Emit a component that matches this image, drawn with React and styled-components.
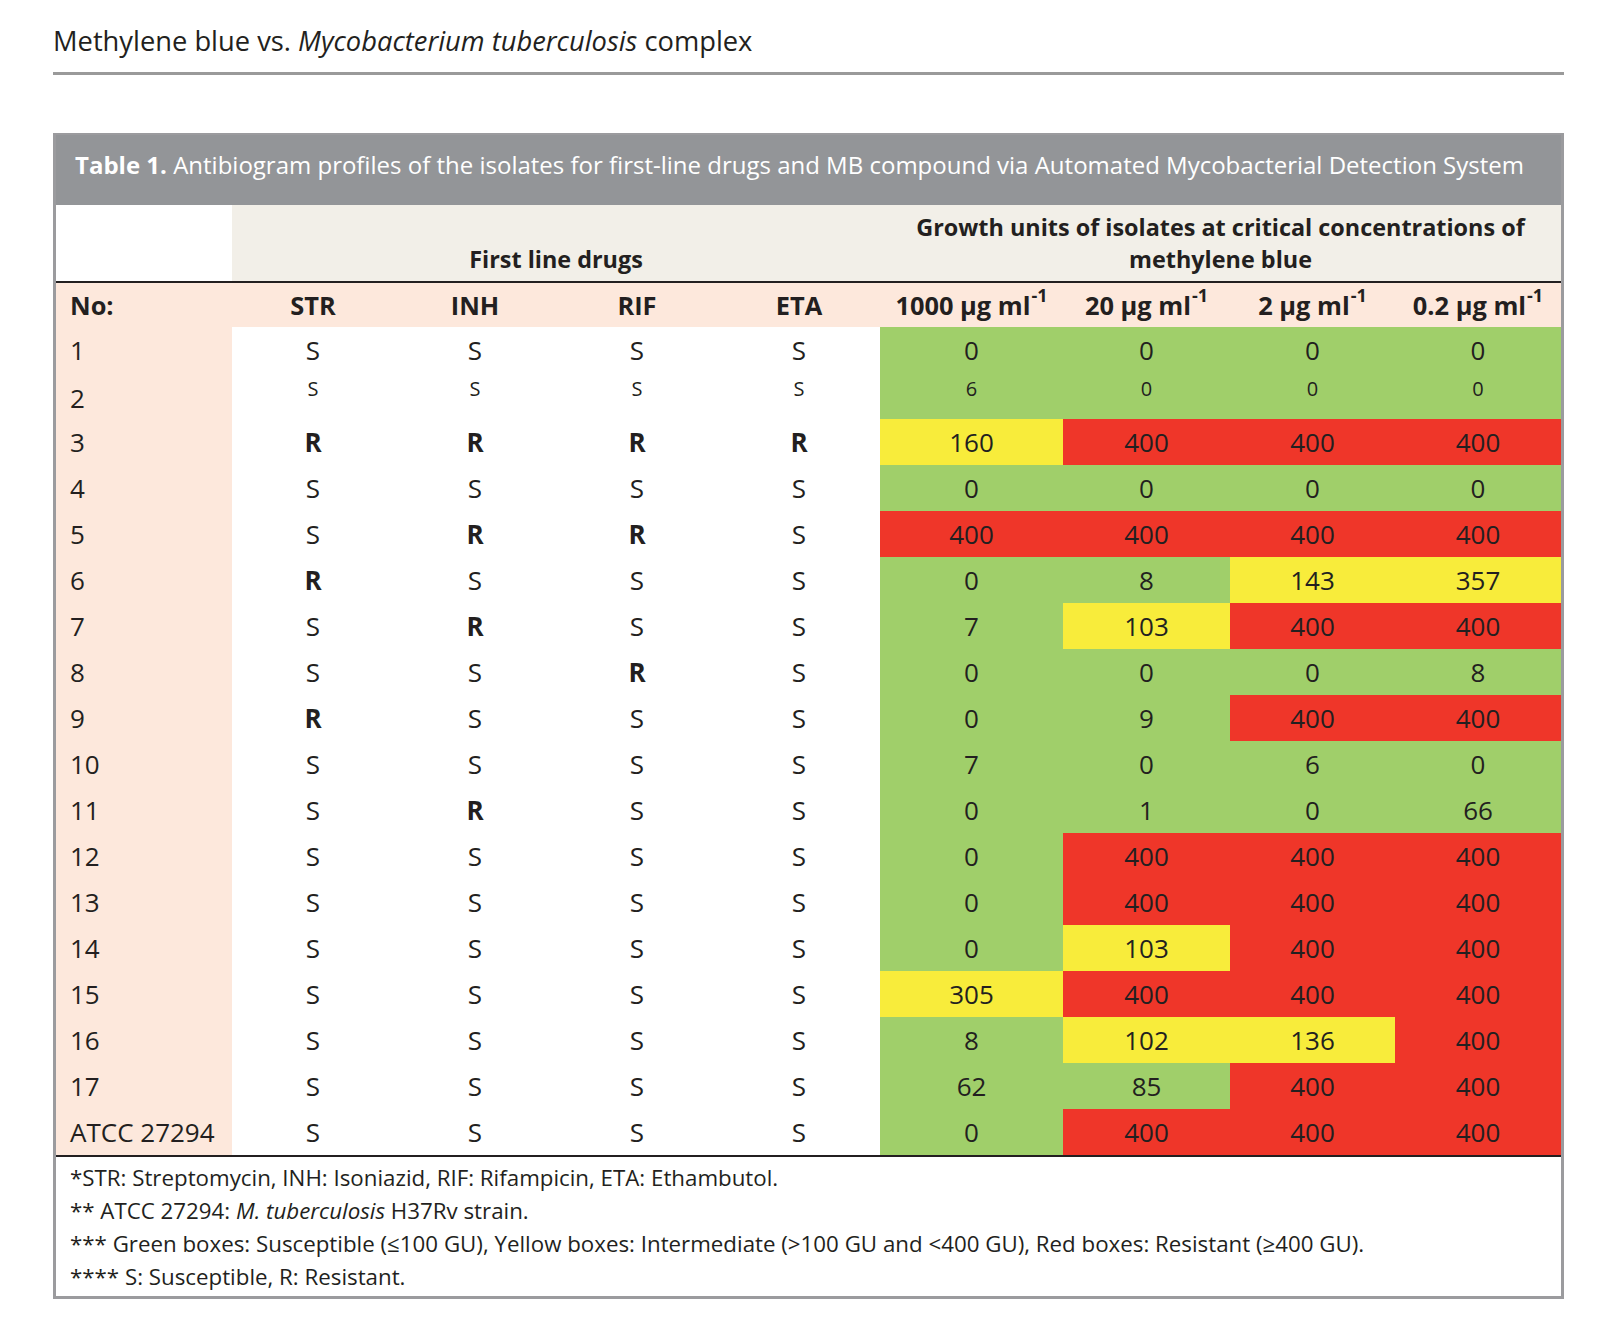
import React from 'react';
import styled, { createGlobalStyle } from 'styled-components';

const GlobalStyle = createGlobalStyle`
  body {
    margin: 0;
    background: #ffffff;
    font-family: "Open Sans", Lato, "Liberation Sans", sans-serif;
    color: #231f20;
  }
`;

// 색상
const GREEN = '#a0cf6a';
const YELLOW = '#f8ec3b';
const RED = '#ef3629';
const PEACH = '#fde8dc';
const BEIGE = '#f2efe8';
const GRAY = '#939598';

const Page = styled.div`
  width: 1511px;
  padding: 0 0 0 53px;
`;

const RunningHead = styled.div`
  height: 75px;
  display: flex;
  align-items: center;
  font-size: 27.3px;
  box-sizing: border-box;
  border-bottom: 3px solid #9a9a9a;
  padding-top: 8px;
`;

const TableBox = styled.div`
  margin-top: 58px;
  border: 3px solid #9b9b9e;
  border-top-width: 2px;
`;

const TitleBar = styled.div`
  background: ${GRAY};
  color: #ffffff;
  height: 70px;
  display: flex;
  align-items: center;
  padding: 0 0 11px 19px;
  box-sizing: border-box;
  font-size: 24px;
  white-space: nowrap;
`;

const Grid = styled.div`
  display: grid;
  grid-template-columns: 176px repeat(4, 162px) 183px 167px 165px 166px;
`;

const GroupHead = styled.div`
  grid-column: ${(p) => p.span};
  background: ${(p) => (p.blank ? '#ffffff' : BEIGE)};
  height: 78px;
  display: flex;
  align-items: flex-end;
  justify-content: center;
  text-align: center;
  font-weight: 700;
  font-size: 23.4px;
  line-height: 32px;
  padding-bottom: 6px;
  box-sizing: border-box;
  border-bottom: 2px solid #231f20;
`;

const ColHead = styled.div`
  background: ${PEACH};
  height: 44px;
  display: flex;
  align-items: center;
  justify-content: ${(p) => (p.left ? 'flex-start' : 'center')};
  padding-left: ${(p) => (p.left ? '14px' : '0')};
  font-weight: 700;
  font-size: 25.4px;
  white-space: nowrap;

  sup {
    font-size: 18px;
    line-height: 0;
    vertical-align: baseline;
    position: relative;
    top: -10px;
    margin-left: 1px;
  }
`;

const Cell = styled.div`
  height: 46px;
  display: flex;
  align-items: ${(p) => (p.small ? 'flex-start' : 'center')};
  padding-top: ${(p) => (p.small ? '6px' : '0')};
  line-height: ${(p) => (p.small ? 1 : 'normal')};
  box-sizing: border-box;
  justify-content: center;
  background: ${(p) => p.bg || '#ffffff'};
  font-size: ${(p) => (p.small ? '20px' : '26px')};
  font-weight: ${(p) => (p.bold ? 700 : 400)};
`;

const LabelCell = styled.div`
  height: 46px;
  display: flex;
  align-items: ${(p) => (p.low ? 'flex-end' : 'center')};
  line-height: ${(p) => (p.low ? 1 : 'normal')};
  padding-bottom: ${(p) => (p.low ? '8px' : '0')};
  box-sizing: border-box;
  padding-left: 14px;
  background: ${PEACH};
  font-size: 26px;
`;

const Notes = styled.div`
  border-top: 2px solid #231f20;
  padding: 4px 0 3px 14px;
  font-size: 22.3px;
  line-height: 33px;
`;

const rows = [
  ['1', 'SSSS', [0, 0, 0, 0]],
  ['2', 'SSSS', [6, 0, 0, 0], true],
  ['3', 'RRRR', [160, 400, 400, 400]],
  ['4', 'SSSS', [0, 0, 0, 0]],
  ['5', 'SRRS', [400, 400, 400, 400]],
  ['6', 'RSSS', [0, 8, 143, 357]],
  ['7', 'SRSS', [7, 103, 400, 400]],
  ['8', 'SSRS', [0, 0, 0, 8]],
  ['9', 'RSSS', [0, 9, 400, 400]],
  ['10', 'SSSS', [7, 0, 6, 0]],
  ['11', 'SRSS', [0, 1, 0, 66]],
  ['12', 'SSSS', [0, 400, 400, 400]],
  ['13', 'SSSS', [0, 400, 400, 400]],
  ['14', 'SSSS', [0, 103, 400, 400]],
  ['15', 'SSSS', [305, 400, 400, 400]],
  ['16', 'SSSS', [8, 102, 136, 400]],
  ['17', 'SSSS', [62, 85, 400, 400]],
  ['ATCC 27294', 'SSSS', [0, 400, 400, 400]],
];

// GU 값에 따른 색상
function colorFor(v) {
  if (v <= 100) return GREEN;
  if (v < 400) return YELLOW;
  return RED;
}

const concs = ['1000', '20', '2', '0.2'];

function App() {
  return (
    <Page>
      <GlobalStyle />
      <RunningHead>
        <span>
          Methylene blue vs. <i>Mycobacterium tuberculosis</i> complex
        </span>
      </RunningHead>

      <TableBox>
        <TitleBar>
          <span>
            <b>Table 1.</b> Antibiogram profiles of the isolates for first-line drugs and MB compound via Automated Mycobacterial Detection System
          </span>
        </TitleBar>

        <Grid>
          <GroupHead span="1 / 2" blank />
          <GroupHead span="2 / 6">First line drugs</GroupHead>
          <GroupHead span="6 / 10">
            Growth units of isolates at critical concentrations of
            <br />
            methylene blue
          </GroupHead>

          <ColHead left>No:</ColHead>
          {['STR', 'INH', 'RIF', 'ETA'].map((d) => (
            <ColHead key={d}>{d}</ColHead>
          ))}
          {concs.map((c) => (
            <ColHead key={c}>
              {c} µg ml<sup>-1</sup>
            </ColHead>
          ))}

          {rows.map(([label, drugs, values, small]) => (
            <React.Fragment key={label}>
              <LabelCell low={small}>{label}</LabelCell>
              {drugs.split('').map((d, i) => (
                <Cell key={'d' + i} small={small} bold={d === 'R'}>
                  {d}
                </Cell>
              ))}
              {values.map((v, i) => (
                <Cell key={'v' + i} small={small} bg={colorFor(v)}>
                  {v}
                </Cell>
              ))}
            </React.Fragment>
          ))}
        </Grid>

        <Notes>
          <div>*STR: Streptomycin, INH: Isoniazid, RIF: Rifampicin, ETA: Ethambutol.</div>
          <div>
            ** ATCC 27294: <i>M. tuberculosis</i> H37Rv strain.
          </div>
          <div>
            *** Green boxes: Susceptible (≤100 GU), Yellow boxes: Intermediate (&gt;100 GU and &lt;400 GU), Red boxes: Resistant (≥400 GU).
          </div>
          <div>**** S: Susceptible, R: Resistant.</div>
        </Notes>
      </TableBox>
    </Page>
  );
}

export default App;
